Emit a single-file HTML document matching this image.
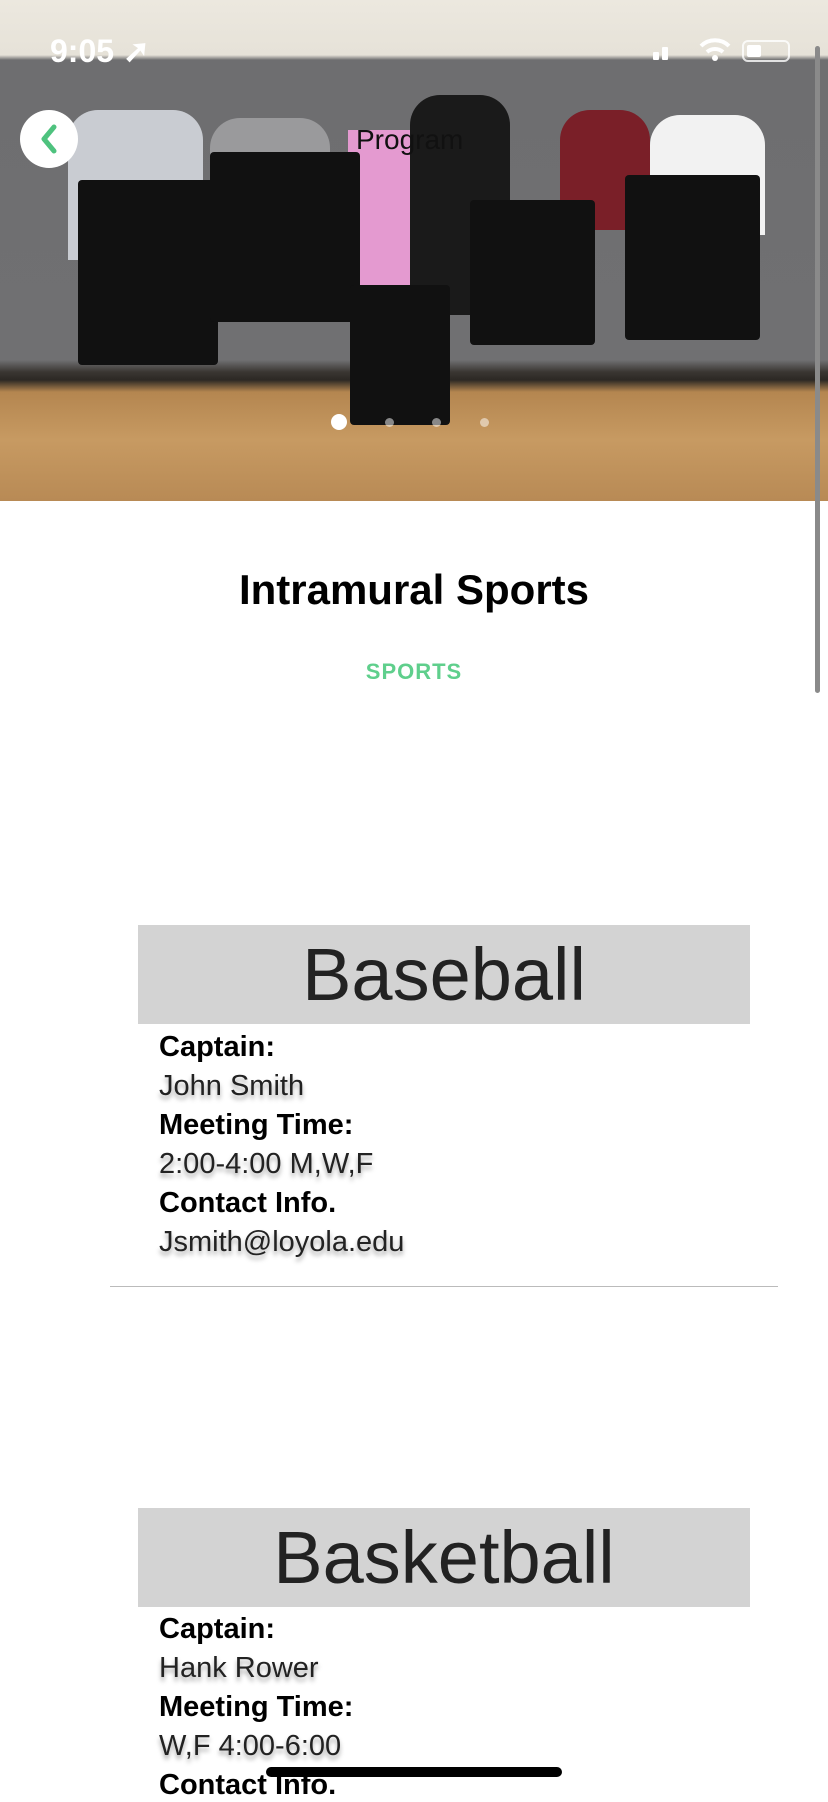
<!DOCTYPE html>
<html><head><meta charset="utf-8"><style>
body{margin:0;width:828px;height:1792px;background:#fff;position:relative;overflow:hidden;font-family:"Liberation Sans",sans-serif}
.a{position:absolute}
.photo{left:0;top:0;width:828px;height:501px;background:linear-gradient(#ece8df 0,#e6e2d8 55px,#6e6e70 60px,#707072 360px,#3a3632 372px,#2c2824 380px,#b48650 392px,#c79a62 440px,#b88a55 501px);overflow:hidden}
.sh{background:#111;border-radius:4px}
.lbl{font-weight:bold;font-size:29px;color:#000;left:159px}
.val{font-size:29px;color:#222;left:159px;text-shadow:0 4px 5px rgba(0,0,0,.35)}
.box{left:138px;width:612px;background:#d3d3d3;color:#222;font-size:74px;text-align:center}
</style></head><body>
<div class="a photo">
 <div class="a" style="left:68px;top:110px;width:135px;height:150px;background:#c9ccd2;border-radius:30px 30px 0 0"></div>
 <div class="a" style="left:210px;top:118px;width:120px;height:100px;background:#9a9a9c;border-radius:30px 30px 0 0"></div>
 <div class="a" style="left:348px;top:130px;width:80px;height:160px;background:#e49ad0"></div>
 <div class="a" style="left:410px;top:95px;width:100px;height:220px;background:#1a1a1a;border-radius:30px 30px 0 0"></div>
 <div class="a" style="left:560px;top:110px;width:90px;height:120px;background:#7a1f28;border-radius:30px 30px 0 0"></div>
 <div class="a" style="left:650px;top:115px;width:115px;height:120px;background:#f2f2f2;border-radius:30px 30px 0 0"></div>
 <div class="a sh" style="left:78px;top:180px;width:140px;height:185px"></div>
 <div class="a sh" style="left:210px;top:152px;width:150px;height:170px"></div>
 <div class="a sh" style="left:350px;top:285px;width:100px;height:140px"></div>
 <div class="a sh" style="left:470px;top:200px;width:125px;height:145px"></div>
 <div class="a sh" style="left:625px;top:175px;width:135px;height:165px"></div>
 <div class="a" style="left:331px;top:414px;width:16px;height:16px;border-radius:50%;background:#fff"></div>
 <div class="a" style="left:385px;top:418px;width:9px;height:9px;border-radius:50%;background:rgba(255,255,255,.5)"></div>
 <div class="a" style="left:432px;top:418px;width:9px;height:9px;border-radius:50%;background:rgba(255,255,255,.5)"></div>
 <div class="a" style="left:480px;top:418px;width:9px;height:9px;border-radius:50%;background:rgba(255,255,255,.5)"></div>
</div>
<div class="a" style="left:50px;top:32px;color:#fff;font-size:32px;font-weight:bold">9:05 ➚</div>
<div class="a" style="left:653px;top:52px;width:6px;height:8px;background:#fff;border-radius:1px"></div>
<div class="a" style="left:662px;top:47px;width:6px;height:13px;background:#fff;border-radius:1px"></div>
<svg class="a" style="left:698px;top:36px" width="34" height="26"><path d="M3 10 A20 20 0 0 1 31 10" fill="none" stroke="#fff" stroke-width="4"/><path d="M9 16 A12 12 0 0 1 25 16" fill="none" stroke="#fff" stroke-width="4"/><circle cx="17" cy="22" r="3" fill="#fff"/></svg>
<div class="a" style="left:742px;top:40px;width:48px;height:22px;border:2px solid rgba(255,255,255,.8);border-radius:6px;box-sizing:border-box"><div style="margin:3px;width:14px;height:12px;background:#fff;border-radius:2px"></div></div>
<div class="a" style="left:20px;top:110px;width:58px;height:58px;border-radius:50%;background:#fff"></div>
<svg class="a" style="left:20px;top:110px" width="58" height="58"><path d="M34 17 L24 29 L34 41" fill="none" stroke="#4ec27e" stroke-width="5" stroke-linecap="round" stroke-linejoin="round"/></svg>
<div class="a" style="left:356px;top:124px;font-size:28px;color:#111">Program</div>
<div class="a" style="left:815px;top:46px;width:5px;height:647px;background:#8a8a8a;border-radius:3px"></div>
<div class="a" style="left:0;width:828px;top:566px;text-align:center;font-size:42px;font-weight:bold;color:#000">Intramural Sports</div>
<div class="a" style="left:0;width:828px;top:659px;text-align:center;font-size:22px;font-weight:bold;color:#5fcf8c;letter-spacing:1px">SPORTS</div>
<div class="a box" style="top:925px;height:99px;line-height:99px">Baseball</div>
<div class="a lbl" style="top:1031px">Captain:</div>
<div class="a val" style="top:1070px">John Smith</div>
<div class="a lbl" style="top:1109px">Meeting Time:</div>
<div class="a val" style="top:1148px">2:00-4:00 M,W,F</div>
<div class="a lbl" style="top:1187px">Contact Info.</div>
<div class="a val" style="top:1226px">Jsmith@loyola.edu</div>
<div class="a" style="left:110px;top:1286px;width:668px;height:1px;background:#bbb"></div>
<div class="a box" style="top:1508px;height:99px;line-height:99px">Basketball</div>
<div class="a lbl" style="top:1613px">Captain:</div>
<div class="a val" style="top:1652px">Hank Rower</div>
<div class="a lbl" style="top:1691px">Meeting Time:</div>
<div class="a val" style="top:1730px">W,F 4:00-6:00</div>
<div class="a lbl" style="top:1769px">Contact Info.</div>
<div class="a" style="left:266px;top:1767px;width:296px;height:10px;border-radius:5px;background:#000"></div>
</body></html>
